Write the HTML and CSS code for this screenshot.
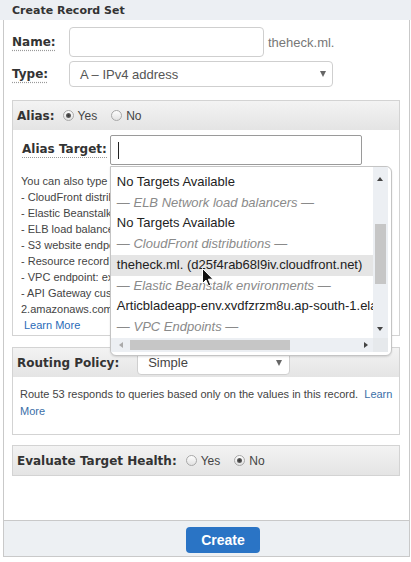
FILE: index.html
```html
<!DOCTYPE html>
<html>
<head>
<meta charset="utf-8">
<link rel="stylesheet" href="styles.css">
</head>
<body>
<div class="dlg-header">Create Record Set</div>
<div class="dialog">
  <div class="dlg-body">
    <div class="form-row row-name">
      <span class="lbl lbl-u col-lbl">Name:</span>
      <div class="field name-field"></div>
      <span class="suffix">theheck.ml.</span>
    </div>
    <div class="form-row row-type">
      <span class="lbl lbl-u col-lbl">Type:</span>
      <div class="field select type-select"><span class="sel-text">A – IPv4 address</span><span class="tri"></span></div>
    </div>

    <section class="box alias-box">
      <div class="box-head">
        <span class="lbl">Alias:</span>
        <span class="opt opt-first"><span class="radio on"></span>Yes</span>
        <span class="opt"><span class="radio"></span>No</span>
      </div>
      <div class="alias-body">
        <div class="target-row">
          <span class="lbl lbl-u target-lbl">Alias Target:</span>
          <div class="target-wrap">
            <div class="field target-field"><span class="caret"></span></div>
            <div class="dropdown">
              <ul class="list">
                <li>No Targets Available</li>
                <li class="grp">— ELB Network load balancers —</li>
                <li>No Targets Available</li>
                <li class="grp">— CloudFront distributions —</li>
                <li class="hl">theheck.ml. (d25f4rab68l9iv.cloudfront.net)</li>
                <li class="grp">— Elastic Beanstalk environments —</li>
                <li>Articbladeapp-env.xvdfzrzm8u.ap-south-1.elasticbeanstalk.com</li>
                <li class="grp">— VPC Endpoints —</li>
                <li>No Targets Available</li>
              </ul>
              <div class="vscroll">
                <span class="arr arr-up"></span>
                <span class="vthumb"></span>
                <span class="arr arr-down"></span>
              </div>
              <div class="hscroll">
                <span class="arr arr-left"></span>
                <span class="hthumb"></span>
                <span class="arr arr-right"></span>
              </div>
              <div class="corner"></div>
            </div>
          </div>
        </div>
        <div class="help">
          <p>You can also type the domain name for the resource. Examples:</p>
          <p>- CloudFront distribution domain name: d111111abcdef8.cloudfront.net</p>
          <p>- Elastic Beanstalk environment CNAME: example.elasticbeanstalk.com</p>
          <p>- ELB load balancer DNS name: example-1.us-east-2.elb.amazonaws.com</p>
          <p>- S3 website endpoint: s3-website.us-east-2.amazonaws.com</p>
          <p>- Resource record set in this hosted zone: www.example.com</p>
          <p>- VPC endpoint: example.us-east-2.vpce.amazonaws.com</p>
          <p>- API Gateway custom regional API: d-abcde12345.execute-api.us-west-</p>
          <p>2.amazonaws.com</p>
          <p class="learn"><a>Learn More</a></p>
        </div>
      </div>
    </section>

    <section class="box routing-box">
      <div class="box-head">
        <span class="lbl">Routing Policy:</span>
        <div class="field select routing-select"><span class="sel-text">Simple</span><span class="tri"></span></div>
      </div>
      <div class="routing-body">Route 53 responds to queries based only on the values in this record.&nbsp; <a>Learn More</a></div>
    </section>

    <section class="box health-box">
      <div class="box-head">
        <span class="lbl">Evaluate Target Health:</span>
        <span class="opt opt-first2"><span class="radio"></span>Yes</span>
        <span class="opt"><span class="radio on"></span>No</span>
      </div>
    </section>
  </div>
  <div class="dlg-footer"><button class="btn-create">Create</button></div>
</div>
<svg class="cursor" width="12" height="19" viewBox="0 0 12 19"><path d="M0.5 0.5 L0.5 15.5 L4 12 L6.5 18 L8.8 17 L6.3 11.2 L11 11.2 Z" fill="#111" stroke="#fff" stroke-width="1"/></svg>
</body>
</html>
```

FILE: styles.css
```css
html, body {
  margin: 0;
  padding: 0;
}
body {
  width: 411px;
  height: 562px;
  overflow: hidden;
  background: #fff;
  font-family: "Liberation Sans", Arial, sans-serif;
  color: #333;
  position: relative;
}
.dlg-header {
  height: 20px;
  background: #eceff3;
  padding-left: 12px;
  font: bold 11px/22px "DejaVu Sans", Verdana, sans-serif;
  color: #333;
}
.dialog {
  margin-left: 3px;
  width: 407px;
  box-sizing: border-box;
  border-left: 1px solid #c9c9c9;
  border-right: 1px solid #c9c9c9;
}
.dlg-body {
  height: 500px;
  box-sizing: border-box;
  padding: 7px 8px 0 8px;
}
.lbl {
  font: bold 12px "DejaVu Sans", Verdana, sans-serif;
  color: #333;
  white-space: nowrap;
}
.lbl-u {
  border-bottom: 1px dotted #999;
  padding-bottom: 1px;
}
.form-row {
  display: flex;
  align-items: center;
}
.col-lbl {
  width: 57px;
  border-bottom: none;
  padding: 0;
  text-decoration: underline dotted #999;
  text-underline-offset: 4px;
}
.field {
  box-sizing: border-box;
  border: 1px solid #cfcfcf;
  border-radius: 4px;
  background: #fff;
}
.name-field {
  width: 195px;
  height: 30px;
}
.suffix {
  margin-left: 4px;
  font-size: 13px;
  color: #777;
}
.row-type {
  margin-top: 4px;
}
.select {
  display: flex;
  align-items: center;
  justify-content: space-between;
  padding: 0 6px 0 10px;
  font-size: 13px;
  color: #555;
}
.type-select {
  width: 264px;
  height: 26px;
}
.tri {
  width: 0;
  height: 0;
  border-left: 3.5px solid transparent;
  border-right: 3.5px solid transparent;
  border-top: 6px solid #666;
}
.box {
  border: 1px solid #d3d3d3;
  width: 388px;
  box-sizing: border-box;
}
.alias-box {
  margin-top: 13px;
  height: 236px;
}
.box-head {
  height: 29px;
  display: flex;
  align-items: center;
  padding-left: 4px;
  background: linear-gradient(#f3f3f3, #e4e4e4);
  font-size: 12px;
  color: #444;
}
.opt {
  display: inline-flex;
  align-items: center;
  margin-left: 14px;
}
.opt-first { margin-left: 8px; }
.opt-first2 { margin-left: 9px; }
.radio {
  display: inline-block;
  width: 11px;
  height: 11px;
  box-sizing: border-box;
  border: 1px solid #a8a8a8;
  border-radius: 50%;
  background: linear-gradient(#fdfdfd, #e2e2e2);
  margin-right: 4px;
  position: relative;
}
.radio.on::after {
  content: "";
  position: absolute;
  left: 2px;
  top: 2px;
  width: 5px;
  height: 5px;
  border-radius: 50%;
  background: radial-gradient(#333, #777);
}
.alias-body {
  padding: 5px 0 0 8px;
}
.target-row {
  display: flex;
  align-items: center;
}
.target-lbl {
  margin-left: 1px;
}
.target-wrap {
  position: relative;
  margin-left: 3px;
  z-index: 2;
}
.target-field {
  width: 252px;
  height: 30px;
  border-color: #9a9a9a;
  border-radius: 2px;
  padding: 6px 0 0 7px;
}
.caret {
  display: block;
  width: 1px;
  height: 17px;
  background: #222;
}
.dropdown {
  position: absolute;
  left: 0;
  top: 31px;
  width: 282px;
  height: 190px;
  box-sizing: border-box;
  background: #fff;
  border: 1px solid #c4c4c4;
  border-radius: 0 6px 6px 6px;
  box-shadow: 0 1px 2px rgba(0,0,0,0.12);
  padding: 0 3px 3px 0;
  display: grid;
  grid-template-columns: 1fr 15px;
  grid-template-rows: 1fr 14px;
}
.list {
  list-style: none;
  margin: 0;
  padding: 5px 0 0 0;
  overflow: hidden;
  font-size: 13px;
  line-height: 20.7px;
  color: #222;
}
.list li {
  white-space: nowrap;
  padding-left: 6px;
}
.list li.grp {
  font-style: italic;
  color: #8a8a8a;
}
.list li.hl {
  background: #e5e5e5;
}
.vscroll {
  background: #eceff3;
  position: relative;
}
.vthumb {
  position: absolute;
  left: 2px;
  top: 57px;
  width: 11px;
  height: 60px;
  background: #c6c6c6;
}
.arr {
  position: absolute;
  width: 0;
  height: 0;
}
.arr-up {
  left: 4px;
  top: 10px;
  border-left: 3.5px solid transparent;
  border-right: 3.5px solid transparent;
  border-bottom: 4px solid #444;
}
.arr-down {
  left: 4px;
  top: 160px;
  border-left: 3.5px solid transparent;
  border-right: 3.5px solid transparent;
  border-top: 4px solid #444;
}
.hscroll {
  background: #eceff3;
  position: relative;
}
.hthumb {
  position: absolute;
  left: 19px;
  top: 2px;
  width: 160px;
  height: 10px;
  background: #c6c6c6;
}
.arr-left {
  left: 8px;
  top: 3.5px;
  border-top: 3.5px solid transparent;
  border-bottom: 3.5px solid transparent;
  border-right: 4px solid #aaa;
}
.arr-right {
  left: 253px;
  top: 3.5px;
  border-top: 3.5px solid transparent;
  border-bottom: 3.5px solid transparent;
  border-left: 4px solid #444;
}
.corner {
  background: #e6e9ec;
}
.help {
  margin-top: 8px;
  width: 360px;
  overflow: hidden;
  font-size: 11px;
  line-height: 16px;
  color: #444;
}
.help p {
  margin: 0;
  white-space: nowrap;
}
.help .learn {
  padding-left: 3px;
}
a {
  color: #2a6bb8;
  cursor: pointer;
}
.routing-box {
  margin-top: 11px;
  height: 88px;
}
.routing-select {
  width: 153px;
  height: 25px;
  margin-left: 18px;
  padding-left: 10px;
  padding-right: 7px;
  color: #444;
}
.routing-body {
  padding: 9px 4px 0 7px;
  font-size: 11px;
  line-height: 17px;
  color: #444;
}
.routing-body a {
  color: #3b6fa8;
}
.health-box {
  margin-top: 10px;
}
.dlg-footer {
  height: 37px;
  box-sizing: border-box;
  border-top: 1px solid #c9c9c9;
  border-bottom: 1px solid #c9c9c9;
  background: #edf0f3;
  padding: 6px 0 0 182px;
}
.btn-create {
  width: 74px;
  height: 26px;
  border: none;
  border-radius: 4px;
  background: #2a74c5;
  color: #fff;
  font: bold 14px "Liberation Sans", Arial, sans-serif;
  padding: 0;
}
.cursor {
  position: absolute;
  left: 202px;
  top: 268px;
  z-index: 5;
}
```
